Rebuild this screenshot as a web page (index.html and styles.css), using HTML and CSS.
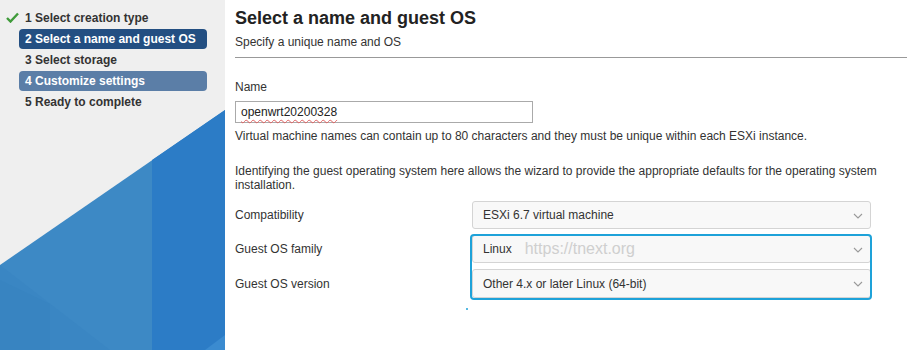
FILE: index.html
```html
<!DOCTYPE html>
<html lang="en">
<head>
  <meta charset="UTF-8" />
  <title>New virtual machine</title>
  <link rel="stylesheet" href="styles.css">
</head>
<body>
  <div class="wizard">
    <div class="sidebar">
      <ul class="steps">
        <li class="step done">
          <svg class="check" width="13" height="11" viewBox="0 0 13 11"><path d="M1 6 L4.5 9.5 L12 1.5" fill="none" stroke="#3f9b3a" stroke-width="2.4"/></svg>
          1 Select creation type
        </li>
        <li class="step current">2 Select a name and guest OS</li>
        <li class="step">3 Select storage</li>
        <li class="step next">4 Customize settings</li>
        <li class="step">5 Ready to complete</li>
      </ul>
      <svg class="art" width="225" height="240" viewBox="0 0 225 240">
        <polygon points="225,0 0,155 0,240 225,240" fill="#3d89c5"/>
        <polygon points="0,155 110,240 0,240" fill="#3a86c3"/>
        <polygon points="0,170 50,194 50,240 0,240" fill="#3884c1"/>
        <polygon points="225,0 152,50 152,240 225,240" fill="#2c7cc6"/>
        <polygon points="225,225 205,240 225,240" fill="#3b8bd0"/>
      </svg>
    </div>

    <div class="main">
      <div class="header">
        <h1>Select a name and guest OS</h1>
        <p class="sub">Specify a unique name and OS</p>
      </div>

      <label class="field-label">Name</label>
      <div class="text-input"><span class="typo">openwrt20200328</span></div>
      <p class="hint">Virtual machine names can contain up to 80 characters and they must be unique within each ESXi instance.</p>
      <p class="info">Identifying the guest operating system here allows the wizard to provide the appropriate defaults for the operating system installation.</p>

      <div class="form-grid">
        <div class="row-label r1">Compatibility</div>
        <div class="select r1">ESXi 6.7 virtual machine
          <svg class="chev" width="10" height="6" viewBox="0 0 10 6"><path d="M1 1 L5 5 L9 1" fill="none" stroke="#999" stroke-width="1.1"/></svg>
        </div>

        <div class="row-label r2">Guest OS family</div>
        <div class="select r2">Linux <span class="mark">https://tnext.org</span>
          <svg class="chev" width="10" height="6" viewBox="0 0 10 6"><path d="M1 1 L5 5 L9 1" fill="none" stroke="#999" stroke-width="1.1"/></svg>
        </div>

        <div class="row-label r3">Guest OS version</div>
        <div class="select r3">Other 4.x or later Linux (64-bit)
          <svg class="chev" width="10" height="6" viewBox="0 0 10 6"><path d="M1 1 L5 5 L9 1" fill="none" stroke="#999" stroke-width="1.1"/></svg>
        </div>

        <div class="focus-ring"></div>
      </div>
      <div class="dot"></div>
    </div>
  </div>
</body>
</html>
```

FILE: styles.css
```css
*{margin:0;padding:0;box-sizing:border-box;}
body{width:922px;height:350px;overflow:hidden;background:#fff;color:#333;font-family:'Liberation Sans',Arial,sans-serif;font-size:12px;}
.wizard{display:flex;height:350px;}

.sidebar{position:relative;width:225px;flex-shrink:0;background:#efefef;}
.steps{list-style:none;padding:8px 0 0 19px;width:207px;display:flex;flex-direction:column;gap:1px;}
.step{position:relative;height:20px;line-height:20px;padding-left:6px;font-weight:bold;font-size:12px;color:#333;border-radius:4px;white-space:nowrap;}
.step.current{background:#234f82;color:#fff;}
.step.next{background:#5b7ea7;color:#fff;}
.check{position:absolute;left:-13px;top:4px;}
.art{position:absolute;left:0;bottom:0;display:block;}

.main{flex:1;padding:0 15px 0 10px;}
.header{border-bottom:1px solid #999;padding:7px 0 8px;}
h1{font-size:18px;font-weight:bold;line-height:22px;color:#222;}
.sub{margin-top:6px;line-height:14px;color:#333;}

.field-label{display:block;margin-top:22px;line-height:14px;}
.text-input{margin-top:7px;width:298px;height:22px;border:1px solid #aaa;padding-left:5px;line-height:20px;color:#222;}
.typo{text-decoration:underline wavy #e06060;text-decoration-thickness:1px;text-underline-offset:3px;}
.hint{margin-top:6px;line-height:14px;}
.info{margin-top:21px;line-height:14px;}

.form-grid{display:grid;grid-template-columns:237px 399px;grid-template-rows:28px 28px 29px;row-gap:6px;margin-top:9px;}
.r1{grid-row:1;}
.r2{grid-row:2;}
.r3{grid-row:3;}
.row-label{display:flex;align-items:center;grid-column:1;}
.select{display:flex;align-items:center;position:relative;grid-column:2;border:1px solid #d4d4d4;border-radius:3px;background:#f8f8f8;padding-left:10px;color:#333;}
.mark{margin-left:13px;font-size:16px;color:#cfcfcf;}
.chev{position:absolute;right:7px;top:11px;}
.focus-ring{position:relative;z-index:1;grid-column:2;grid-row:2 / 4;margin:-1px -1px -2px -2px;border:2px solid #1ea2d9;border-radius:4px;}

.dot{width:2px;height:2px;border-radius:1px;background:#1ea2d9;margin:10px 0 0 231px;}
```
